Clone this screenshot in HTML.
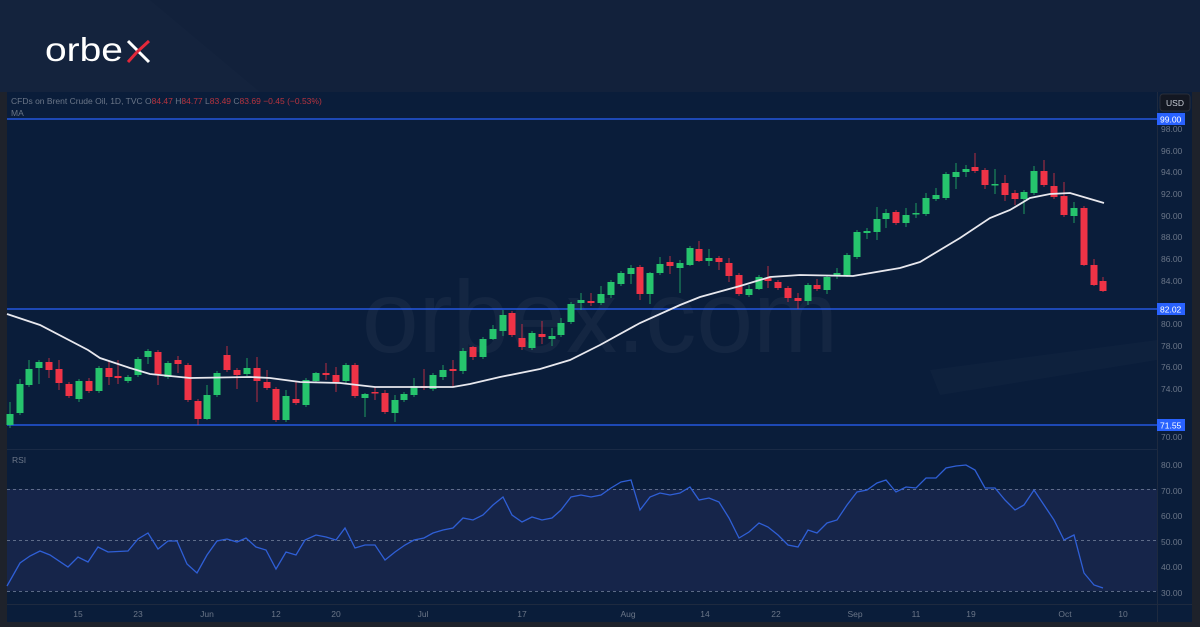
<!DOCTYPE html>
<html><head><meta charset="utf-8"><style>
html,body{margin:0;padding:0;background:#12213b;width:1200px;height:627px;overflow:hidden;font-family:"Liberation Sans",sans-serif}
</style></head><body>
<svg id="s" width="1200" height="627" xmlns="http://www.w3.org/2000/svg" style="position:absolute;left:0;top:0">
<rect width="1200" height="627" fill="#12213b"/>
<polygon points="0,0 150,0 260,92 0,92" fill="#15253f" opacity="0.6"/>
<rect x="0" y="92" width="1200" height="535" fill="#1e222b"/>
<rect x="7" y="92" width="1185" height="530" fill="#0a1d3a"/>
<rect x="7" y="489" width="1150" height="102" fill="#16254a"/>
<line x1="7" y1="449.5" x2="1157" y2="449.5" stroke="#1a2a45"/>
<line x1="7" y1="604.5" x2="1192" y2="604.5" stroke="#1e2a3f"/>
<line x1="1157.5" y1="92" x2="1157.5" y2="622" stroke="#1e2a3f"/>
<g stroke="#7d8aa5" stroke-dasharray="3,3" stroke-width="1" opacity="0.7">
<line x1="7" y1="489.5" x2="1157" y2="489.5"/><line x1="7" y1="540.5" x2="1157" y2="540.5"/><line x1="7" y1="591.5" x2="1157" y2="591.5"/></g>
<polygon points="930,370 1157,340 1157,360 940,395" fill="#ffffff" opacity="0.018"/>
<text x="600" y="352" text-anchor="middle" font-size="102" fill="#ffffff" opacity="0.04" font-family="Liberation Sans">orbex.com</text>
<g stroke="#2962ff" stroke-width="1.3"><line x1="7" y1="119" x2="1157" y2="119"/><line x1="7" y1="309" x2="1157" y2="309"/><line x1="7" y1="425" x2="1157" y2="425"/></g>
<g id="c"></g>
<polyline fill="none" stroke="#e8e8ee" stroke-width="1.8" points="7,314 40,325 88,350 100,358 130,368 150,374 190,378 250,377 270,378 300,382 340,383 375,387 410,387 453,387 470,384 500,377 540,369 570,360 600,345 640,323 680,305 700,297 740,286 770,277 800,275 853,276 900,268 920,262 940,250 960,238 990,218 1010,210 1030,198 1050,194 1070,193 1104,203"/>
<polyline fill="none" stroke="#2f5fd6" stroke-width="1.3" points="7,586 20,563 30,556 40,551 50,555 68,567 78,557 88,562 98,547 108,552 128,551 138,539 148,533 158,549 168,541 177,541 187,564 197,573 207,555 217,541 227,539 237,542 246,538 256,547 266,550 276,569 286,552 296,555 305,540 316,535 326,537 336,540 345,528 355,548 365,545 375,545 385,560 395,552 405,545 414,540 424,538 433,533 443,530 453,528 463,518 473,520 483,515 493,505 503,497 512,515 522,522 532,517 542,520 552,518 561,510 571,497 581,495 591,497 601,495 611,488 621,482 631,480 640,510 650,497 660,493 670,495 680,493 690,487 699,500 709,498 719,502 729,518 739,538 749,532 759,523 768,527 778,535 788,545 798,547 808,530 817,533 827,523 837,520 847,505 857,492 867,490 877,483 886,480 896,492 906,487 916,488 926,478 936,478 946,468 956,466 966,465 975,470 985,488 995,488 1005,500 1015,510 1024,505 1034,490 1044,505 1054,520 1064,540 1074,535 1084,573 1094,585 1103,588"/>
<g font-size="8.5" fill="#6b7688">
<text x="11" y="104">CFDs on Brent Crude Oil, 1D, TVC  O<tspan fill="#b8343f">84.47</tspan>  H<tspan fill="#b8343f">84.77</tspan>  L<tspan fill="#b8343f">83.49</tspan>  C<tspan fill="#b8343f">83.69</tspan>  <tspan fill="#b8343f">−0.45 (−0.53%)</tspan></text>
<text x="11" y="116">MA</text>
<text x="12" y="463">RSI</text>
</g>
<g font-size="8.5" fill="#6b7688" id="ax"></g>
<rect x="1160" y="94" width="30" height="17" rx="3" fill="#131722" stroke="#2a2e39"/>
<text x="1175" y="106" font-size="8.5" fill="#c9cdd6" text-anchor="middle">USD</text>
<g font-size="8.5" fill="#fff">
<rect x="1157" y="113" width="28" height="12" fill="#2962ff"/><text x="1160" y="122.5">99.00</text>
<rect x="1157" y="303" width="28" height="12" fill="#2962ff"/><text x="1160" y="312.5">82.02</text>
<rect x="1157" y="419" width="28" height="12" fill="#2962ff"/><text x="1160" y="428.5">71.55</text>
</g>
<g font-size="8.5" fill="#6b7688" text-anchor="middle">
<text x="78" y="617">15</text><text x="138" y="617">23</text><text x="207" y="617">Jun</text><text x="276" y="617">12</text><text x="336" y="617">20</text><text x="423" y="617">Jul</text><text x="522" y="617">17</text><text x="628" y="617">Aug</text><text x="705" y="617">14</text><text x="776" y="617">22</text><text x="855" y="617">Sep</text><text x="916" y="617">11</text><text x="971" y="617">19</text><text x="1065" y="617">Oct</text><text x="1123" y="617">10</text>
</g>
<text transform="translate(45,61) scale(1.18,1)" font-size="33" fill="#ffffff" font-family="Liberation Sans">orbe</text>
<g stroke-width="3" stroke-linecap="butt"><line x1="128" y1="41" x2="149" y2="62" stroke="#fff"/><line x1="149" y1="41" x2="137" y2="52" stroke="#e3283a"/><line x1="137" y1="52" x2="128" y2="62" stroke="#e3283a"/></g>
</svg>
<script>
var G="#26c46d",R="#ef3346";
var d=[[10,414,425,G,402,428],[20,384,413,G,379,415],[29,369,385,G,360,387],[39,362,368,G,360,384],[49,362,370,R,358,378],[59,369,383,R,360,390],[69,384,396,R],[79,381,399,G,379,402],[89,381,391,R,378,393],[99,368,391,G],[109,368,377,R,360,385],[118,376,378,R,360,384],[128,377,381,G],[138,359,375,G],[148,351,357,G,349,364],[158,352,374,R,350,385],[168,363,377,G],[178,360,364,R,356,373],[188,365,400,R],[198,401,419,R,399,425],[207,395,419,G,385,420],[217,373,395,G],[227,355,370,R,346,372],[237,370,375,R,368,389],[247,368,374,G,358,376],[257,368,381,R,357,402],[267,382,388,R,370,390],[276,389,420,R],[286,396,420,G,390,422],[296,399,403,R,382,405],[306,380,405,G],[316,373,381,G,372,383],[326,373,375,R,363,380],[336,375,382,R,367,392],[346,365,381,G],[355,365,396,R,363,398],[365,394,398,G,393,417],[375,392,393,R,387,400],[385,393,412,R,390,414],[395,400,413,G,395,422],[404,394,400,G,392,402],[414,386,395,G,378,397],[424,386,388,R,369,390],[433,375,389,G],[443,370,377,G,365,380],[453,369,371,R,360,387],[463,351,371,G,348,374],[473,347,357,R,346,360],[483,339,357,G],[493,329,339,G,325,340],[503,315,331,G,310,336],[512,313,335,R],[522,338,347,R,324,350],[532,333,348,G,331,350],[542,334,337,R,321,344],[552,336,339,G,328,346],[561,323,335,G,318,337],[571,304,322,G],[581,300,303,G,293,310],[591,301,303,R,293,306],[601,294,303,G,286,305],[611,282,295,G,280,298],[621,273,284,G],[631,268,274,G,265,284],[640,267,294,R,265,300],[650,273,294,G,272,304],[660,264,273,G,257,275],[670,262,266,R,256,274],[680,263,268,G,260,293],[690,248,265,G,246,266],[699,249,261,R,241,262],[709,258,261,G,249,266],[719,258,262,R,256,270],[729,263,276,R,258,282],[739,275,294,R],[749,289,295,G,285,297],[759,277,289,G,275,290],[768,278,281,R,266,288],[778,282,288,R],[788,288,298,R,286,302],[798,298,301,R,293,309],[808,285,301,G,283,305],[817,285,289,R,279,291],[827,277,290,G,275,294],[837,273,276,G,268,279],[847,255,275,G],[857,232,257,G],[867,231,233,G,228,239],[877,219,232,G,207,240],[886,213,219,G,209,228],[896,212,223,R,210,225],[906,215,223,G,208,227],[916,213,214,G,203,218],[926,198,214,G,193,216],[936,195,199,G,188,201],[946,174,198,G],[956,172,177,G,163,189],[966,169,172,G,165,177],[975,167,171,R,153,173],[985,170,185,R,168,189],[995,184,185,G,169,194],[1005,183,195,R,175,201],[1015,193,199,R,190,205],[1024,192,199,G,190,214],[1034,171,193,G,166,195],[1044,171,185,R,160,187],[1054,186,197,R,173,199],[1064,196,215,R,182,217],[1074,208,216,G,202,223],[1084,208,265,R,206,266],[1094,265,285,R,259,286],[1103,281,291,R,277,292]];
var ns="http://www.w3.org/2000/svg",g=document.getElementById("c");
d.forEach(function(c){var w=document.createElementNS(ns,"line");var t=c[4]||c[1]-2,b=c[5]||c[2]+2;w.setAttribute("x1",c[0]);w.setAttribute("x2",c[0]);w.setAttribute("y1",t);w.setAttribute("y2",b);w.setAttribute("stroke",c[3]);w.setAttribute("stroke-width","1");w.setAttribute("opacity","0.75");g.appendChild(w);var r=document.createElementNS(ns,"rect");r.setAttribute("x",c[0]-3.5);r.setAttribute("y",c[1]);r.setAttribute("width",7);r.setAttribute("height",Math.max(1.5,c[2]-c[1]));r.setAttribute("fill",c[3]);g.appendChild(r);});
var ax=document.getElementById("ax");
[[98,129],[96,151],[94,172],[92,194],[90,216],[88,237],[86,259],[84,281],[80,324],[78,346],[76,367],[74,389],[70,437],[80.001,465],[70.001,491],[60,516],[50,542],[40,567],[30,593]].forEach(function(p){var t=document.createElementNS(ns,"text");t.setAttribute("x",1161);t.setAttribute("y",p[1]+3);t.textContent=Math.floor(p[0]).toFixed(2);ax.appendChild(t);});
</script>
</body></html>
